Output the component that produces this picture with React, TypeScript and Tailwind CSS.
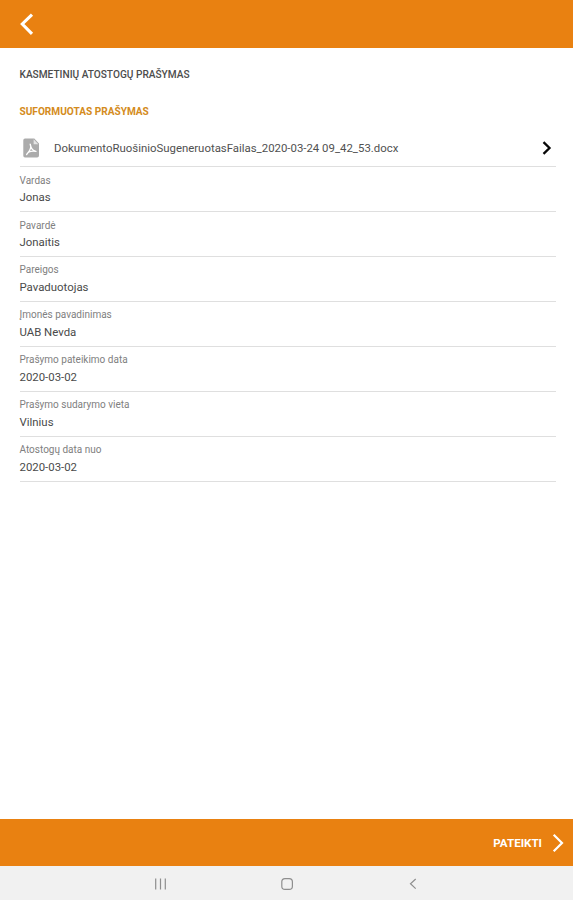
import React from "react";

const fields = [
  { label: "Vardas", value: "Jonas" },
  { label: "Pavardė", value: "Jonaitis" },
  { label: "Pareigos", value: "Pavaduotojas" },
  { label: "Įmonės pavadinimas", value: "UAB Nevda" },
  { label: "Prašymo pateikimo data", value: "2020-03-02" },
  { label: "Prašymo sudarymo vieta", value: "Vilnius" },
  { label: "Atostogų data nuo", value: "2020-03-02" },
];

function FileIcon() {
  return (
    <svg width="17" height="20" viewBox="0 0 17 20" className="ml-[3px] shrink-0">
      <path
        d="M2 .5h9.3L16 5.4V17.6a1.9 1.9 0 0 1-1.9 1.9H2A1.7 1.7 0 0 1 .3 17.8V2.2A1.7 1.7 0 0 1 2 .5Z"
        fill="#ababab"
      />
      <path d="M10.6 1.3v4.9h4.7Z" fill="#e4e4e4" />
      <path
        d="M7.2 6.2c1.2 2.7.9 5.5-3.6 10.3 1-2.4 4.9-3.8 9.4-3.2-2.8-.1-4.9-2.6-5.8-7.1Z"
        fill="none"
        stroke="#fff"
        strokeWidth="1.3"
        strokeLinejoin="round"
      />
    </svg>
  );
}

export default function App() {
  return (
    <div className="flex h-[900px] w-full flex-col bg-white font-['Roboto','Liberation_Sans',sans-serif]">
      <header className="flex h-[48px] shrink-0 items-center bg-[#e98111] pl-[20px]">
        <svg width="14" height="22" viewBox="0 0 14 22" fill="none" stroke="#fff" strokeWidth="3.1">
          <path d="M12 1.7 2.3 11 12 20.8" />
        </svg>
      </header>

      <main className="flex-1 pr-[17px] pl-[19.5px]">
        <h1 className="mt-[20px] h-[14px] text-[10.15px] leading-[14px] font-medium whitespace-nowrap text-[#4c4c4c]">
          KASMETINIŲ ATOSTOGŲ PRAŠYMAS
        </h1>
        <h2 className="mt-[23px] h-[14px] text-[10.1px] leading-[14px] font-bold whitespace-nowrap text-[#d48b20]">
          SUFORMUOTAS PRAŠYMAS
        </h2>

        <div className="mt-[10px] flex h-[38.4px] items-center border-b border-[#dfdfdf]">
          <FileIcon />
          <span className="ml-[14.5px] flex-1 pt-[2px] text-[11.4px] whitespace-nowrap text-[#505050]">
            DokumentoRuošinioSugeneruotasFailas_2020-03-24 09_42_53.docx
          </span>
          <svg width="10" height="14" viewBox="0 0 10 14" className="mr-[4px]" fill="none" stroke="#080808" strokeWidth="2.3">
            <path d="M1.5 1.2 7.5 7l-6 5.8" />
          </svg>
        </div>

        {fields.map((field) => (
          <div key={field.label} className="h-[44.9px] border-b border-[#dfdfdf] pt-[6.3px]">
            <div className="h-[15px] text-[10px] leading-[14px] text-[#808080]">{field.label}</div>
            <div className="mt-[1.6px] text-[11.4px] leading-[15px] text-[#4a4a4a]">{field.value}</div>
          </div>
        ))}
      </main>

      <footer className="shrink-0">
        <div className="flex h-[47px] items-center justify-end bg-[#e98111] pr-[9px] text-white">
          <span className="pt-[2px] text-[11.6px] font-bold">PATEIKTI</span>
          <svg width="12" height="20" viewBox="0 0 12 20" className="ml-[10px]" fill="none" stroke="#fff" strokeWidth="2.2">
            <path d="M1.7 1.7 10 10l-8.3 8.3" />
          </svg>
        </div>
        <nav className="h-[34px] bg-[#f1f1f1]">
          <svg width="573" height="34" viewBox="0 0 573 34" fill="none" stroke="#8e8e8e" strokeWidth="1.2">
            <path d="M155.7 12.5v11M160.5 12.5v11M165.3 12.5v11" />
            <rect x="281.8" y="12.6" width="10.6" height="10.8" rx="3.2" />
            <path d="m415.7 13-5.2 4.8 5.2 4.8" />
          </svg>
        </nav>
      </footer>
    </div>
  );
}
